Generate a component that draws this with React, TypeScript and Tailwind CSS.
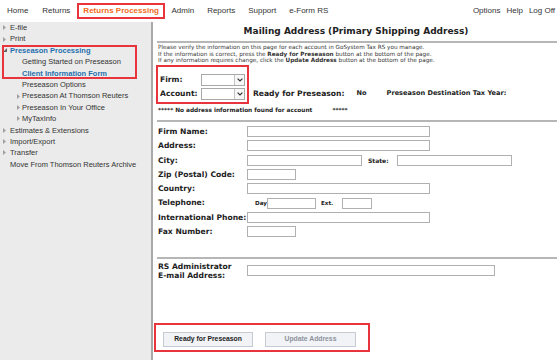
import React from "react";

const RED = "ring-2 ring-inset ring-[#e8343c]";

type NavItem = {
  label: string;
  level: 0 | 1;
  caret?: "closed" | "open";
  active?: boolean;
};

const TOP_NAV = ["Admin", "Reports", "Support", "e-Form RS"];

const NAV_BEFORE: NavItem[] = [
  { label: "E-file", level: 0, caret: "closed" },
  { label: "Print", level: 0, caret: "closed" },
];

const NAV_BOXED: NavItem[] = [
  { label: "Preseason Processing", level: 0, caret: "open", active: true },
  { label: "Getting Started on Preseason", level: 1 },
  { label: "Client Information Form", level: 1, active: true },
];

const NAV_AFTER: NavItem[] = [
  { label: "Preseason Options", level: 1 },
  { label: "Preseason At Thomson Reuters", level: 1, caret: "closed" },
  { label: "Preseason In Your Office", level: 1, caret: "closed" },
  { label: "MyTaxInfo", level: 1, caret: "closed" },
  { label: "Estimates & Extensions", level: 0, caret: "closed" },
  { label: "Import/Export", level: 0, caret: "closed" },
  { label: "Transfer", level: 0, caret: "closed" },
  { label: "Move From Thomson Reuters Archive", level: 0 },
];

const Caret = ({ kind }: { kind?: "closed" | "open" }) => {
  if (kind === "open") {
    return (
      <svg width="4" height="4" viewBox="0 0 4 4">
        <path d="M4 0V4H0Z" fill="#666" />
      </svg>
    );
  }
  if (kind === "closed") {
    return (
      <svg width="3" height="5" viewBox="0 0 3 5">
        <path d="M0 0L3 2.5L0 5Z" fill="#a0a0a0" />
      </svg>
    );
  }
  return null;
};

const NavRow = ({ item }: { item: NavItem }) => (
  <div
    className={
      "flex h-[11.4px] items-center whitespace-nowrap " +
      (item.level === 0 ? "pl-[3px]" : "pl-[17px]")
    }
  >
    <span className={"flex items-center " + (item.level === 0 ? "w-[7px]" : "w-[5px]")}>
      <Caret kind={item.caret} />
    </span>
    <span className={item.active ? "font-bold text-[#1f6fae]" : ""}>{item.label}</span>
  </div>
);

const Select = () => (
  <div className="flex h-[12px] w-[44px] border border-[#a9a9a9] bg-white">
    <div className="flex-1" />
    <div className="flex w-[10px] items-center justify-center border-l border-[#c4c4c4] bg-[#f7f7f7]">
      <svg width="6" height="4" viewBox="0 0 6 4">
        <path d="M0.6 0.6L3 3L5.4 0.6" stroke="#333" strokeWidth="1.2" fill="none" />
      </svg>
    </div>
  </div>
);

const Field = ({ w }: { w: string }) => (
  <input readOnly className={"h-[11px] border border-[#b0b0b0] bg-white " + w} />
);

const Row = ({ label, children }: { label: string; children: React.ReactNode }) => (
  <div className="flex h-[14.3px] items-center">
    <span className="w-[89px] shrink-0 whitespace-nowrap font-bold">{label}</span>
    {children}
  </div>
);

const Rule = () => <div className="ml-[4px] mr-[2px] h-[2px] bg-[#b6b6b6]" />;

export default function App() {
  return (
    <div className="h-[360px] w-[559px] overflow-hidden bg-white font-['Liberation_Sans',Arial,sans-serif] text-[#333]">
      <header className="flex h-[22px] items-center text-[8px] leading-[10px]">
        <nav className="flex items-center">
          <a className="px-[7px]">Home</a>
          <a className="px-[7px]">Returns</a>
          <a className="border-2 border-[#e8343c] px-[4px] py-[1px] font-bold text-[#f26b21]">
            Returns Processing
          </a>
          {TOP_NAV.map((label) => (
            <a key={label} className="px-[6.5px]">
              {label}
            </a>
          ))}
        </nav>
        <div className="ml-auto flex gap-[6px] pr-[4px]">
          <a>Options</a>
          <a>Help</a>
          <a>Log Off</a>
        </div>
      </header>

      <div className="flex h-[338px]">
        <aside className="w-[153px] shrink-0 border-r-2 border-[#a9a9a9] bg-[#ebebeb] text-[7.5px]">
          {NAV_BEFORE.map((item) => (
            <NavRow key={item.label} item={item} />
          ))}
          <div className={"ml-[2px] w-[135px] " + RED}>
            <div className="-ml-[2px]">
              {NAV_BOXED.map((item) => (
                <NavRow key={item.label} item={item} />
              ))}
            </div>
          </div>
          {NAV_AFTER.map((item) => (
            <NavRow key={item.label} item={item} />
          ))}
        </aside>

        <main className="min-w-0 flex-1 font-['DejaVu_Sans',Verdana,sans-serif] text-[7.6px] text-[#222]">
          <h1 className="flex h-[19px] items-center justify-center pt-[1px] text-[9px] font-bold">
            Mailing Address (Primary Shipping Address)
          </h1>
          <Rule />

          <div className="pl-[5px]">
            <div className="pt-[1px] text-[5.7px] leading-[6.5px] text-[#333]">
              <p>Please verify the information on this page for each account in GoSystem Tax RS you manage.</p>
              <p>
                If the information is correct, press the <b>Ready for Preseason</b> button at the bottom of the page.
              </p>
              <p>
                If any information requires change, click the <b>Update Address</b> button at the bottom of the page.
              </p>
            </div>

            <div className="mt-[1px] flex items-end">
              <div className="-ml-[2px] border-2 border-[#e8343c] px-[2px] pb-[1px] pt-[6px]">
                <div className="flex h-[14px] items-center">
                  <span className="w-[41px] font-bold">Firm:</span>
                  <Select />
                </div>
                <div className="flex h-[14px] items-center">
                  <span className="w-[41px] font-bold">Account:</span>
                  <Select />
                </div>
              </div>
              <div className="mb-[3px] ml-[4px] flex h-[14px] items-center whitespace-nowrap font-bold">
                <span>Ready for Preseason:</span>
                <span className="ml-[12px] text-[6.6px]">No</span>
                <span className="ml-[20px] text-[6.6px]">Preseason Destination Tax Year:</span>
              </div>
            </div>

            <p className="mt-[3px] flex h-[8px] items-center whitespace-nowrap text-[5.8px] font-bold">
              <span>***** No address information found for account</span>
              <span className="ml-[20px]">*****</span>
            </p>
          </div>

          <div className="mt-[5px]">
            <Rule />
          </div>

          <div className="pl-[5px] pt-[3px]">
            <Row label="Firm Name:">
              <Field w="w-[183px]" />
            </Row>
            <Row label="Address:">
              <Field w="w-[183px]" />
            </Row>
            <Row label="City:">
              <Field w="w-[115px]" />
              <span className="ml-[6px] w-[29px] text-[6px] font-bold">State:</span>
              <Field w="w-[115px]" />
            </Row>
            <Row label="Zip (Postal) Code:">
              <Field w="w-[49px]" />
            </Row>
            <Row label="Country:">
              <Field w="w-[183px]" />
            </Row>
            <Row label="Telephone:">
              <span className="-ml-[2px] w-[22px] pl-[10px] text-[5.6px] font-bold">Day</span>
              <Field w="w-[49px]" />
              <span className="ml-[5px] w-[21px] text-[5.6px] font-bold">Ext.</span>
              <Field w="w-[30px]" />
            </Row>
            <Row label="International Phone:">
              <Field w="w-[183px]" />
            </Row>
            <Row label="Fax Number:">
              <Field w="w-[49px]" />
            </Row>
          </div>

          <div className="mt-[18px]">
            <Rule />
          </div>

          <div className="flex items-center pl-[5px] pt-[3px]">
            <div className="w-[89px] shrink-0 font-bold leading-[9px]">
              <div>RS Administrator</div>
              <div>E-mail Address:</div>
            </div>
            <Field w="w-[248px]" />
          </div>

          <div className="ml-[1px] mt-[43px] flex w-[216px] gap-[12px] border-2 border-[#e8343c] pb-[3px] pl-[7px] pt-[7px] font-['Liberation_Sans',Arial,sans-serif] text-[6.8px] font-bold">
            <button className="h-[15px] w-[90px] border border-[#c6cbd3] bg-[#f1f3f7] text-[#222]">
              Ready for Preseason
            </button>
            <button className="h-[15px] w-[91px] border border-[#c6cbd3] bg-[#f1f3f7] text-[#8d929b]">
              Update Address
            </button>
          </div>
        </main>
      </div>
    </div>
  );
}
